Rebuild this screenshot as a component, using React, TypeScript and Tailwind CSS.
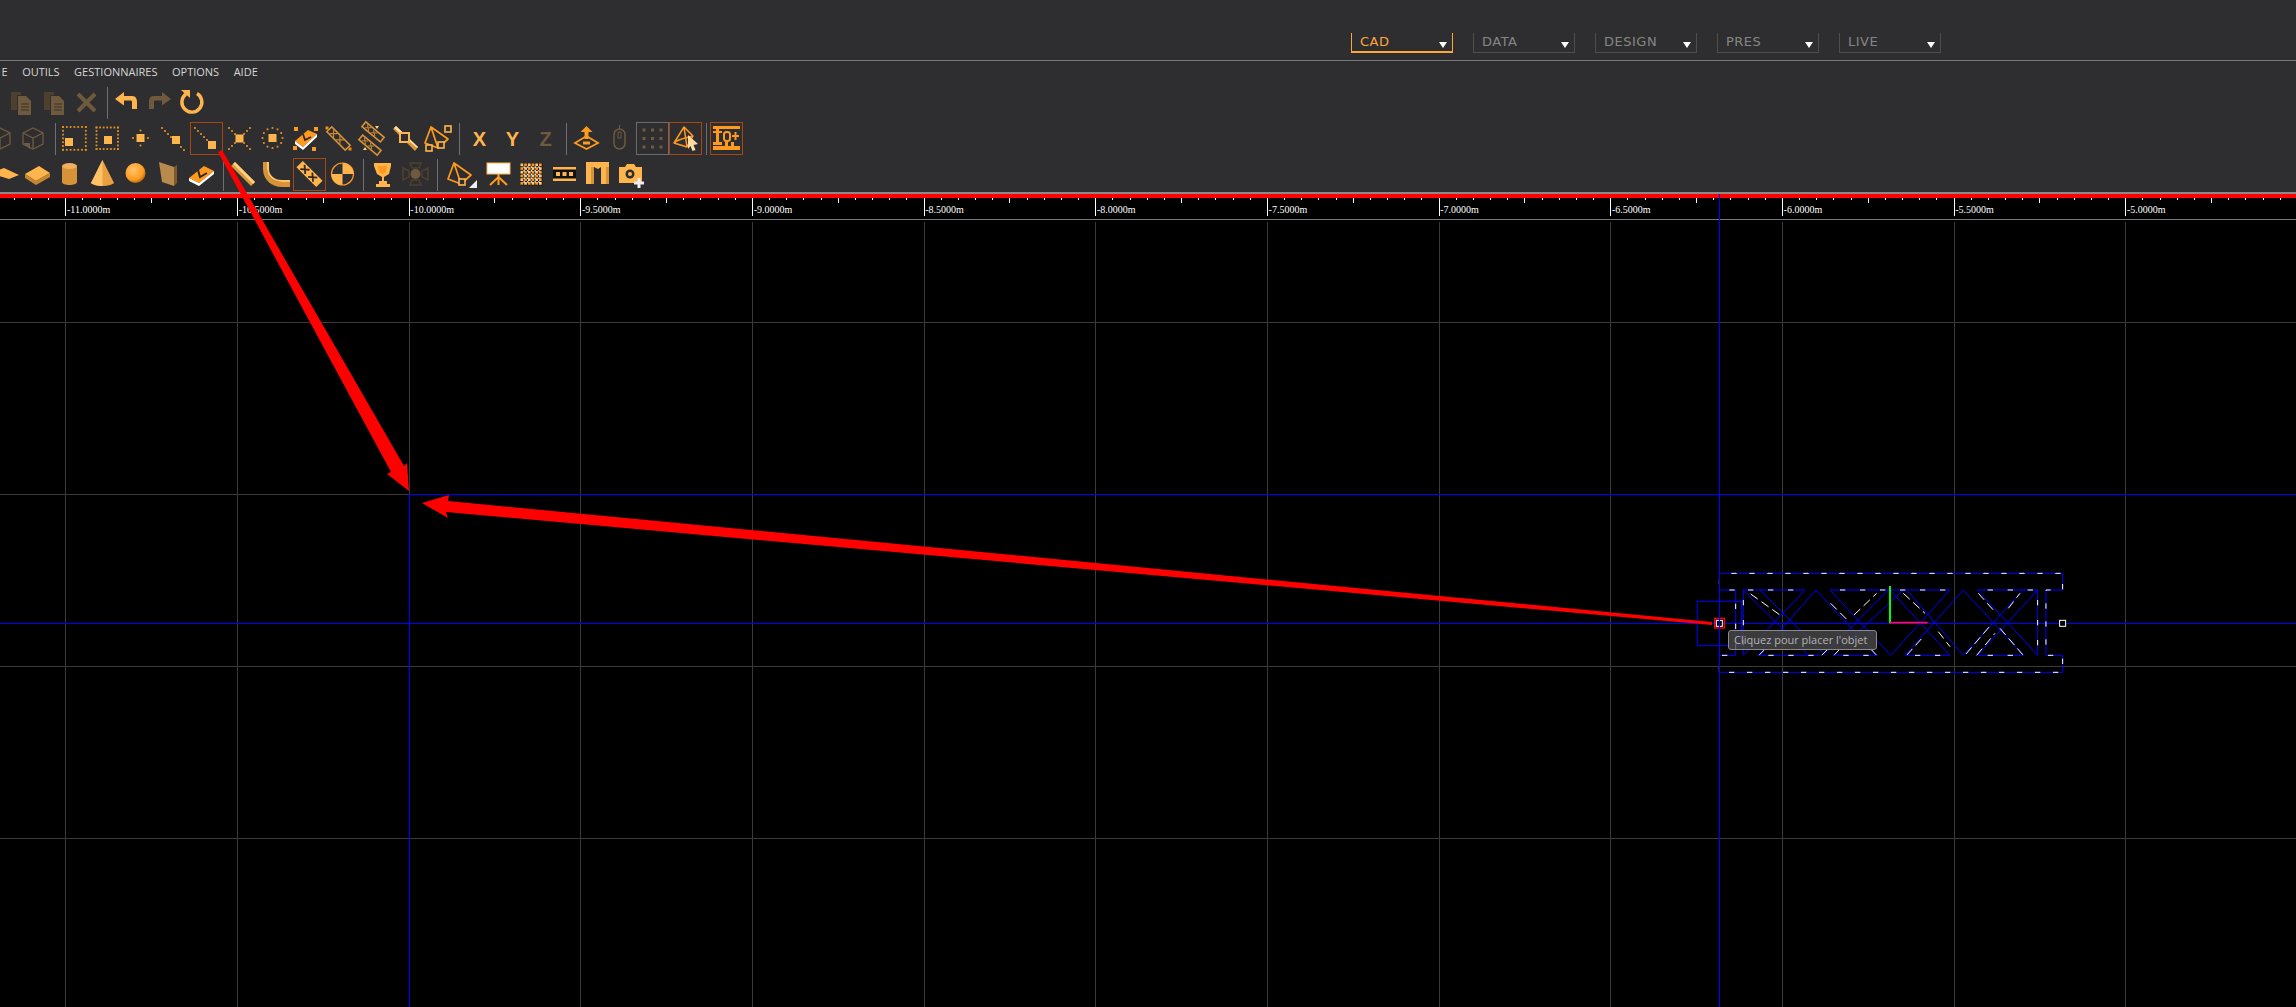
import type { ReactNode } from 'react';

const L = '#ffb54d';
const D = '#ff9a1e';
const M = '#6f5a3d';
const MD = '#4d402e';

const rulerLabels = ['-11.0000m', '-10.5000m', '-10.0000m', '-9.5000m', '-9.0000m', '-8.5000m', '-8.0000m', '-7.5000m', '-7.0000m', '-6.5000m', '-6.0000m', '-5.5000m', '-5.0000m'];
const tabs = ['DATA', 'DESIGN', 'PRES', 'LIVE'];
const menu = ['E', 'OUTILS', 'GESTIONNAIRES', 'OPTIONS', 'AIDE'];

const X0 = 65.7;
const STEP = 171.67;

function Svg({ children }: { children: ReactNode }) {
    return (
        <svg width="33" height="33" viewBox="0 0 33 33" className="overflow-visible">
            {children}
        </svg>
    );
}

function Cell({ children, className = '' }: { children?: ReactNode; className?: string }) {
    return <div className={`w-[33px] h-[33px] shrink-0 flex items-center justify-center ${className}`}>{children}</div>;
}

function Sep({ className = '' }: { className?: string }) {
    return <div className={`w-px h-[32px] shrink-0 bg-[#6f6f6f] ${className}`} />;
}

function Dots({ pts, c = '#e8901c', s = 1.8 }: { pts: number[][]; c?: string; s?: number }) {
    return (
        <>
            {pts.map(([x, y], i) => (
                <rect key={i} x={x - s / 2} y={y - s / 2} width={s} height={s} fill={c} />
            ))}
        </>
    );
}

const range = (a: number, b: number, n: number) => Array.from({ length: n }, (_, i) => a + ((b - a) * i) / (n - 1));
const squareDots = (a: number, b: number, n: number) => {
    const r = range(a, b, n);
    return [...r.map((v) => [v, a]), ...r.map((v) => [v, b]), ...r.map((v) => [a, v]), ...r.map((v) => [b, v])];
};

function Pages({ c, c2 }: { c: string; c2: string }) {
    return (
        <Svg>
            <path d="M7 6h10v3h-4v15H7z" fill={c2} />
            <path d="M14 10h8l5 5v14H14z" fill={c} />
            <path d="M17 18h8M17 21h8M17 24h8" stroke={c2} strokeWidth="1.3" />
        </Svg>
    );
}

function Cube({ c = M }: { c?: string }) {
    return (
        <Svg>
            <path d="M6 11l10-5 10 5v11l-10 5-10-5z" fill="none" stroke={c} strokeWidth="1.3" />
            <path d="M6 11l10 5 10-5M16 16v11" fill="none" stroke={c} strokeWidth="1.3" />
            <path d="M6 21l7 0 0 6z" fill={c} />
        </Svg>
    );
}

function Book() {
    return (
        <Svg>
            <path d="M4 20l15-12 10 5-15 12z" fill={D} />
            <path d="M4 20l10 5 15-12v3L14 28 4 23z" fill="#fff" />
            <path d="M13 12l2 7 7-4" fill="none" stroke="#33261a" strokeWidth="2" />
        </Svg>
    );
}

function Pyramid({ c = D }: { c?: string }) {
    return <path d="M10 5L4 21l13 5 10-9zM10 5l7 21" fill="none" stroke={c} strokeWidth="1.7" strokeLinejoin="round" />;
}

function HollowSq({ x, y, s = 6 }: { x: number; y: number; s?: number }) {
    return <rect x={x} y={y} width={s} height={s} fill="#2f2f31" stroke={L} strokeWidth="1.6" />;
}

function Plaid() {
    const idx = [0, 1, 2, 3, 4, 5];
    return (
        <Svg>
            <rect x="5.500" y="5.500" width="22" height="22" fill="#1d1a16" />
            {idx.flatMap((i) =>
                idx.map((j) => <rect key={`${i}-${j}`} x={5.5 + i * 3.7} y={5.5 + j * 3.7} width="2.700" height="2.700" fill={(i + j) % 2 ? '#ff9a1e' : '#ffc87a'} />),
            )}
            {idx.slice(1).flatMap((i) => idx.slice(1).map((j) => <rect key={`w${i}-${j}`} x={4.7 + i * 3.7} y={4.7 + j * 3.7} width="1.400" height="1.400" fill="#fff" />))}
        </Svg>
    );
}

function TrussDrawing() {
    const blue = '#0000ff';
    const diag = [
        [190, 120, 386, 316],
        [240, 120, 436, 316],
        [375, 120, 190, 316],
        [408, 120, 235, 316],
        [408, 120, 590, 316],
        [450, 120, 632, 316],
        [625, 120, 430, 316],
        [670, 120, 460, 316],
        [630, 120, 810, 316],
        [680, 120, 850, 316],
        [810, 120, 632, 316],
        [850, 120, 675, 316],
        [850, 120, 1030, 316],
        [893, 120, 1073, 316],
        [1030, 120, 850, 316],
        [1073, 120, 893, 316],
    ];
    // the parts of the diagonals that show white in the reference
    const white = 'M212 132L300 195M237 316L262 290M452 160L500 208M522 195L590 130M425 316L445 296M462 316L490 286M575 300L590 316M670 130L735 190M775 245L810 290M680 316L730 260M895 130L940 180M985 175L1020 130M858 312L930 228M890 316L945 250M960 235L1030 316';
    const outer = 'M118 70H1148V120H1098V316H1148V367H118';
    const tops = 'M118 120H167V316H118M190 316V120H375M450 120H810M893 120H1073V316M235 316H420M460 316H590M675 316H810M893 316H1030';
    return (
        <g transform="translate(1680 550) scale(0.3333)" fill="none">
            <rect x="52" y="154" width="133" height="133" stroke={blue} strokeWidth="3" />
            {diag.map(([a, b, c, d], i) => (
                <line key={i} x1={a} y1={b} x2={c} y2={d} stroke={blue} strokeWidth="3" />
            ))}
            <path d={white} stroke="#fff" strokeWidth="3" strokeDasharray="26 14" />
            <path d={outer} stroke={blue} strokeWidth="3" />
            <path d={outer} stroke="#fff" strokeWidth="3" strokeDasharray="16 38" strokeDashoffset="-36" />
            <path d={tops} stroke={blue} strokeWidth="3" />
            <path d={tops} stroke="#fff" strokeWidth="3" strokeDasharray="16 44" strokeDashoffset="-30" />
            <path d="M118 88V104M118 350V366" stroke="#ffff00" strokeWidth="3" />
            <path d="M630 108V220" stroke="#00ff00" strokeWidth="6" />
            <path d="M630 218H743" stroke="#ff1040" strokeWidth="5" />
            <rect x="104" y="205" width="29" height="29" stroke="#ff0000" strokeWidth="4" />
            <rect x="109" y="211" width="18" height="18" stroke="#fff" strokeWidth="3" fill="#000" />
            <rect x="1139" y="211" width="18" height="18" stroke="#fff" strokeWidth="3" fill="#000" />
        </g>
    );
}

function Ruler() {
    return (
        <div className="relative h-[21px] shrink-0 bg-black overflow-hidden">
            <svg width="2296" height="21" className="absolute inset-0">
                {Array.from({ length: 140 }, (_, i) => {
                    const x = Math.floor(X0 - STEP + (i * STEP) / 10) + 0.5;
                    const h = i % 10 === 0 ? 18 : i % 5 === 0 ? 5 : 2;
                    return <line key={i} x1={x} y1="0" x2={x} y2={h} stroke="#fff" />;
                })}
            </svg>
            <div className="flex ml-[65px] pt-[5px]">
                {rulerLabels.map((label) => (
                    <div key={label} className="w-[171.67px] shrink-0 pl-[2px] font-['Liberation_Serif',serif] text-[10px] leading-[13px] text-white">
                        {label}
                    </div>
                ))}
            </div>
        </div>
    );
}

function Canvas() {
    const horizontal = [322, 494, 666, 838];
    return (
        <div className="relative flex-1 bg-black overflow-hidden">
            <svg width="2296" height="787" viewBox="0 220 2296 787" className="absolute inset-0">
                {Array.from({ length: 13 }, (_, i) => {
                    const x = Math.floor(X0 + i * STEP) + 0.5;
                    return <line key={i} x1={x} y1="222" x2={x} y2="1007" stroke="#3a3a3a" />;
                })}
                {horizontal.map((y) => (
                    <line key={y} x1="0" y1={y + 0.5} x2="2296" y2={y + 0.5} stroke="#3a3a3a" />
                ))}
                <line x1="409.5" y1="494.5" x2="2296" y2="494.5" stroke="#0000ff" />
                <line x1="409.5" y1="494" x2="409.5" y2="1007" stroke="#0000ff" />
                <line x1="0" y1="623.5" x2="2296" y2="623.5" stroke="#0000ff" />
                <TrussDrawing />
            </svg>
            <div className="absolute left-[1728px] top-[410px] w-[149px] h-[20px] rounded-[3px] border border-[#8a8a8a] bg-[#4a4a4a]/80 pl-[5px] font-['Open_Sans',sans-serif] text-[11px] leading-[18px] text-[#b4b4b4] whitespace-nowrap">
                Cliquez pour placer l'objet
            </div>
        </div>
    );
}

export default function App() {
    return (
        <div className="relative w-[2296px] h-[1007px] overflow-hidden flex flex-col bg-[#2e2e30]">
            <header className="h-[61px] shrink-0 border-b border-[#777] flex items-start pl-[1351px] pt-[33px] gap-[20px] font-['DejaVu_Sans',sans-serif] text-[13px] tracking-[0.5px]">
                <div className="relative w-[102px] h-[20px] border-b-2 border-x border-[#ffa638] text-[#ffa638] pl-[8px] leading-[18px]">
                    CAD
                    <span className="absolute right-[5px] top-[9px] border-x-[4px] border-t-[6px] border-x-transparent border-t-white" />
                </div>
                {tabs.map((tab) => (
                    <div key={tab} className="relative w-[102px] h-[20px] border-b border-x border-[#4e4e4e] text-[#868686] pl-[8px] leading-[18px]">
                        {tab}
                        <span className="absolute right-[5px] top-[9px] border-x-[4px] border-t-[6px] border-x-transparent border-t-white" />
                    </div>
                ))}
            </header>

            <nav className="h-[25px] shrink-0 flex items-center gap-[14.5px] pl-[1.5px] pb-[2px] font-['Open_Sans',sans-serif] text-[11px] text-[#d6d6d6]">
                {menu.map((item) => (
                    <span key={item}>{item}</span>
                ))}
            </nav>

            <div className="flex flex-col gap-[3px] pb-[1px]">
                <div className="flex items-center h-[33px] ml-[4px]">
                    <Cell><Pages c={M} c2={MD} /></Cell>
                    <Cell><Pages c={M} c2={MD} /></Cell>
                    <Cell>
                        <Svg><path d="M8 8l17 17M25 8L8 25" stroke={M} strokeWidth="4" /></Svg>
                    </Cell>
                    <Sep className="ml-[4px] mr-[2px]" />
                    <Cell>
                        <Svg><path d="M5 13l9-7v4h8c4 0 5 3 5 6v7h-5v-7c0-1-.5-1.500-1.500-1.500H14v5z" fill={L} /></Svg>
                    </Cell>
                    <Cell>
                        <Svg><path d="M28 13l-9-7v4h-8c-4 0-5 3-5 6v7h5v-7c0-1 .5-1.500 1.500-1.500H19v5z" fill={M} /></Svg>
                    </Cell>
                    <Cell>
                        <Svg>
                            <path d="M10 8A10 10 0 1 0 21 7.500" fill="none" stroke={L} strokeWidth="3.4" />
                            <path d="M5 4h9v8z" fill={L} />
                        </Svg>
                    </Cell>
                </div>

                <div className="flex items-center h-[33px] ml-[-16px]">
                    <Cell><Cube /></Cell>
                    <Cell><Cube /></Cell>
                    <Sep className="ml-[5px] mr-[2px]" />
                    <Cell>
                        <Svg>
                            <Dots pts={squareDots(5, 27.8, 7)} />
                            <rect x="7" y="16" width="8" height="8" fill={L} />
                        </Svg>
                    </Cell>
                    <Cell>
                        <Svg>
                            <Dots pts={squareDots(5.5, 27, 7)} />
                            <rect x="13" y="14" width="8" height="8" fill={L} />
                        </Svg>
                    </Cell>
                    <Cell>
                        <Svg>
                            <rect x="12.500" y="12" width="8" height="8" fill={L} />
                            <Dots pts={[[16.5, 8.5], [16.5, 23.5], [9, 16], [24, 16]]} />
                        </Svg>
                    </Cell>
                    <Cell>
                        <Svg>
                            <Dots pts={[[5, 6], [8, 9], [11, 12], [14, 15], [24, 25], [27, 28]]} />
                            <rect x="15" y="14" width="8" height="8" fill={L} />
                        </Svg>
                    </Cell>
                    <Cell className="border border-[#a84510]">
                        <Svg>
                            <Dots pts={[[5, 6], [8, 9], [11, 12], [14, 15], [17, 18]]} />
                            <rect x="18" y="19" width="8" height="8" fill={L} />
                        </Svg>
                    </Cell>
                    <Cell>
                        <Svg>
                            <Dots pts={[[6, 6], [9, 9], [12, 12], [27, 6], [24, 9], [21, 12], [6, 27], [9, 24], [12, 21], [27, 27], [24, 24], [21, 21]]} />
                            <rect x="12.500" y="12.500" width="8" height="8" fill={L} />
                        </Svg>
                    </Cell>
                    <Cell>
                        <Svg>
                            <rect x="12.500" y="12" width="8" height="8" fill={L} />
                            <Dots pts={Array.from({ length: 12 }, (_, i) => [16.5 + 10 * Math.cos((i * Math.PI) / 6), 16 + 10 * Math.sin((i * Math.PI) / 6)])} />
                        </Svg>
                    </Cell>
                    <Cell>
                        <Svg>
                            <path d="M6 19l13-11 9 4-14 13z" fill={D} />
                            <path d="M6 19l8 6 14-13v3L14 28 6 22z" fill="#fff" />
                            <path d="M14 12l2 6 6-3" fill="none" stroke="#33261a" strokeWidth="1.800" />
                            <Dots pts={[[7, 7], [27, 7], [6, 26], [25, 27]]} s={4} c={D} />
                        </Svg>
                    </Cell>
                    <Cell>
                        <Svg>
                            <g transform="translate(16.500 16.500) rotate(45)">
                                <rect x="-13" y="-3.500" width="26" height="7" fill="none" stroke="#d89238" strokeWidth="1.500" />
                                <path d="M-10-3L-4 3M-10 3L-4-3M-1-3L5 3M-1 3L5-3" stroke="#c98632" strokeWidth="1.200" />
                            </g>
                            <Dots pts={[[5, 6], [28, 27]]} s={3} />
                        </Svg>
                    </Cell>
                    <Cell>
                        <Svg>
                            <g transform="translate(16.500 16.500) rotate(40)">
                                <rect x="-15" y="-9" width="24" height="6" fill="none" stroke="#d89238" strokeWidth="1.600" />
                                <rect x="-9" y="3" width="24" height="6" fill="none" stroke="#d89238" strokeWidth="1.600" />
                                <path d="M-12-8L-7-4M-12-4L-7-8M-4-8L1-4M-4-4L1-8M-6 4L-1 8M-6 8L-1 4M2 4L7 8M2 8L7 4" stroke="#c98632" />
                            </g>
                            <path d="M20 4l4 0 -2 3zM8 28l4 0-2-3z" fill="#ffd080" />
                        </Svg>
                    </Cell>
                    <Cell>
                        <Svg>
                            <path d="M5 7l3-3 22 21-3 4z" fill="#d89238" />
                            <path d="M8 4l22 21-1 1L6 6z" fill="#ffe2a8" />
                            <rect x="12" y="11" width="9" height="9" fill="#2f2f31" stroke={L} strokeWidth="2" />
                        </Svg>
                    </Cell>
                    <Cell>
                        <Svg>
                            <Pyramid />
                            <HollowSq x={24} y={4} />
                            <HollowSq x={5} y={23} />
                            <HollowSq x={17} y={20} />
                        </Svg>
                    </Cell>
                    <Sep className="ml-[5px] mr-[3px]" />
                    {['X', 'Y', 'Z'].map((axis) => (
                        <Cell key={axis} className={`font-['Liberation_Sans',sans-serif] font-bold text-[20px] ${axis === 'Z' ? 'text-[#6f5a3d]' : 'text-[#ffb54d]'}`}>
                            {axis}
                        </Cell>
                    ))}
                    <Sep className="ml-[4px] mr-[3px]" />
                    <Cell>
                        <Svg>
                            <path d="M16.500 4l-6 6h4v7h4v-7h4z" fill={D} />
                            <path d="M5 21l11.500-7 11.500 7-11.500 6z" fill="none" stroke={D} strokeWidth="1.800" />
                            <path d="M13 21h7" stroke={D} strokeWidth="3" />
                        </Svg>
                    </Cell>
                    <Cell>
                        <Svg>
                            <rect x="11" y="7" width="11" height="20" rx="5.500" fill="none" stroke={M} strokeWidth="1.500" />
                            <path d="M16.500 3v4" stroke={M} />
                            <rect x="15" y="10" width="3" height="6" fill="none" stroke={M} />
                        </Svg>
                    </Cell>
                    <Cell className="border border-[#6a6a6a]">
                        <Svg>
                            <Dots pts={[8, 16.5, 25].flatMap((x) => [8, 16.5, 25].map((y) => [x, y]))} c={M} s={3} />
                        </Svg>
                    </Cell>
                    <Cell className="border border-[#a84510]">
                        <Svg>
                            <path d="M15 5L5 21l13 4 6-11zM15 5l3 20M5 21c4-4 12-5 19-7" fill="none" stroke={D} strokeWidth="1.500" strokeLinejoin="round" />
                            <path d="M19 13l10 9-4.500 1 2 5-3 1-2-5-2.500 3z" fill="#ffd9a0" />
                        </Svg>
                    </Cell>
                    <Sep className="ml-[4px] mr-[3px]" />
                    <Cell className="border border-[#a84510]">
                        <Svg>
                            <path d="M3 4h27v3H3zM6 7h3v16H6zM3 9h9v2H3zM3 20h9v3H3zM3 24h27v4H3zM15 20h3v4h-3zM21 20h3v4h-3z" fill={D} />
                            <rect x="14" y="10" width="6" height="9" rx="2.500" fill="none" stroke={D} strokeWidth="2" />
                            <path d="M22 14h7M25.500 10v8" stroke={D} strokeWidth="2" />
                        </Svg>
                    </Cell>
                </div>

                <div className="flex items-center h-[33px] ml-[-13px]">
                    <Cell>
                        <Svg><path d="M3 15l14-5 15 7-10 4z" fill={L} /></Svg>
                    </Cell>
                    <Cell>
                        <Svg>
                            <path d="M5 16L19 8l11 7-14 8z" fill={L} />
                            <path d="M5 16l11 7v4L5 20zM16 23l14-8v4l-14 8z" fill="#c98632" />
                        </Svg>
                    </Cell>
                    <Cell>
                        <Svg>
                            <path d="M9 8v16c0 4 15 4 15 0V8z" fill="#d89238" />
                            <ellipse cx="16.500" cy="8" rx="7.500" ry="3" fill="#f0b060" />
                        </Svg>
                    </Cell>
                    <Cell>
                        <Svg>
                            <path d="M16.500 2L5 25c4 4 19 4 23 0z" fill="#e8a040" />
                            <path d="M16.500 2L5 25c2 2 7 3 11.500 3z" fill="#ffc266" />
                        </Svg>
                    </Cell>
                    <Cell>
                        <Svg>
                            <defs>
                                <radialGradient id="sphere" cx="0.4" cy="0.35" r="0.7">
                                    <stop offset="0" stopColor="#ffc56e" />
                                    <stop offset="0.7" stopColor="#ff9a1e" />
                                    <stop offset="1" stopColor="#a85f10" />
                                </radialGradient>
                            </defs>
                            <circle cx="16.500" cy="15" r="10" fill="url(#sphere)" />
                        </Svg>
                    </Cell>
                    <Cell>
                        <Svg>
                            <path d="M7 4l15 5v19L10 24z" fill="#b88a4e" />
                            <path d="M22 9l3-2v18l-3 3z" fill="#7d5a2c" />
                        </Svg>
                    </Cell>
                    <Cell><Book /></Cell>
                    <Sep className="ml-[5px] mr-[1px]" />
                    <Cell>
                        <Svg>
                            <path d="M6 8l4-4 20 20-4 4z" fill="#e09a3c" />
                            <path d="M8 6l2-2 20 20-2 2z" fill="#ffd080" />
                        </Svg>
                    </Cell>
                    <Cell className="ml-[2px]">
                        <Svg>
                            <path d="M7 4v7c0 8 7 13 15 13h8v5h-8C12 29 3 22 3 11V4z" fill="#d89238" />
                            <path d="M7 4v7c0 8 7 13 15 13h8v-2h-8C14 22 9 17 9 11V4z" fill="#ffc266" />
                        </Svg>
                    </Cell>
                    <Cell className="border border-[#a84510]">
                        <Svg>
                            <g transform="translate(16.500 16) rotate(45)">
                                <rect x="-14" y="-4.500" width="28" height="9" fill={L} />
                                <path d="M-10-3L-3 3M-10 3L-3-3M1-3L8 3M1 3L8-3" stroke="#33261a" strokeWidth="1.800" />
                            </g>
                        </Svg>
                    </Cell>
                    <Cell>
                        <Svg>
                            <circle cx="16.500" cy="16" r="11" fill="#2f2f31" stroke={D} strokeWidth="1.200" />
                            <path d="M16.500 5A11 11 0 0 1 27.500 16H16.500z" fill={L} />
                            <path d="M16.500 27A11 11 0 0 1 5.500 16H16.500z" fill={L} />
                        </Svg>
                    </Cell>
                    <Sep className="ml-[4px] mr-[2px]" />
                    <Cell>
                        <Svg>
                            <path d="M8 5h17v3l-2 8-5 3v4h3v3h3v3H10v-3h3v-3h3v-4l-5-3-3-8z" fill={L} />
                            <path d="M12 8h9l-1 6-3 2h-1l-3-2z" fill="#ff9a1e" />
                        </Svg>
                    </Cell>
                    <Cell>
                        <Svg>
                            <circle cx="16.500" cy="16" r="5" fill={M} />
                            <path d="M11 5h11l-2 5h-7zM11 27h11l-2-5h-7zM4 10l6 3v6l-6 3zM29 10l-6 3v6l6 3z" fill="none" stroke={MD} strokeWidth="1.500" />
                        </Svg>
                    </Cell>
                    <Sep className="ml-[5px] mr-[6px]" />
                    <Cell>
                        <Svg>
                            <Pyramid />
                            <HollowSq x={15} y={21} />
                            <path d="M25 30l8-8v8z" fill="#eee" />
                        </Svg>
                    </Cell>
                    <Cell className="ml-[5px]">
                        <Svg>
                            <rect x="5" y="5" width="23" height="11" fill="#fff" stroke="#ffb54d" />
                            <path d="M16.500 16v11M16.500 19L8 27M16.500 19L25 27" stroke={D} strokeWidth="2" fill="none" />
                        </Svg>
                    </Cell>
                    <Cell><Plaid /></Cell>
                    <Cell>
                        <Svg>
                            <rect x="5" y="9" width="23" height="14" fill="#111" />
                            <path d="M5 9h23v2.500H5zM5 20.500h23V23H5z" fill={L} />
                            <Dots pts={[[10, 16], [16.5, 16], [23, 16]]} c={L} s={4} />
                        </Svg>
                    </Cell>
                    <Cell>
                        <Svg>
                            <path d="M5 4h23v22h-8V9l-3 2-4-2v17H5z" fill={L} />
                            <path d="M10 9h3v17h-3zM25 9h3v17h-3z" fill="#d89238" />
                        </Svg>
                    </Cell>
                    <Cell>
                        <Svg>
                            <path d="M5 9h6l2-3h7l2 3h6v16H5z" fill={L} />
                            <circle cx="16" cy="16" r="4.500" fill="#2f2f31" />
                            <circle cx="16" cy="16" r="2" fill={L} />
                            <path d="M25 20v10M20 25h10" stroke="#eee" strokeWidth="3" />
                        </Svg>
                    </Cell>
                </div>
            </div>

            <div className="h-[2px] shrink-0 bg-[#8a8a8a]" />
            <div className="h-[4px] shrink-0 bg-[#ff0000]" />
            <Ruler />
            <div className="h-px shrink-0 bg-[#777]" />
            <Canvas />

            <svg width="2296" height="1007" className="absolute inset-0 pointer-events-none">
                <line x1="1719.5" y1="194" x2="1719.5" y2="1007" stroke="#0000ff" />
                <path d="M218 152L222 150L404 466L407 463L409 491L387 474L391 472z" fill="#ff0000" />
                <path d="M422 503L449 495L448 501L1712 622L1712 625L446 512L448 518z" fill="#ff0000" />
            </svg>
        </div>
    );
}
